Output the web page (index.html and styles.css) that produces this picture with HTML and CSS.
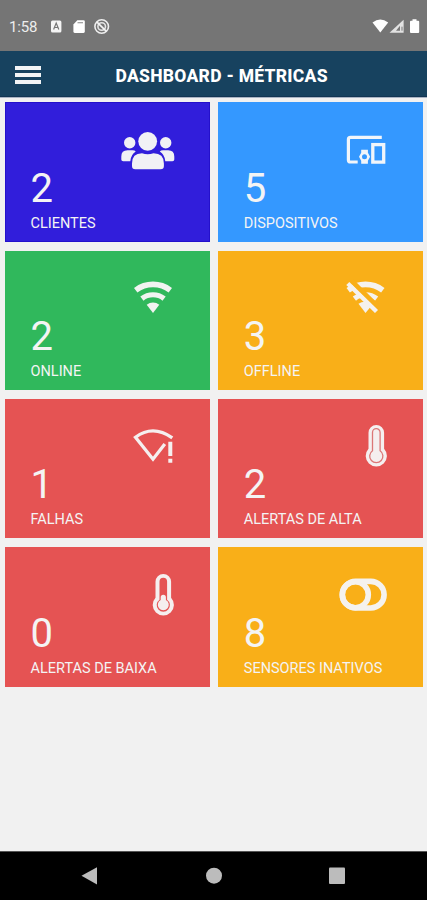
FILE: index.html
```html
<!DOCTYPE html>
<html lang="pt-BR">
<head>
<meta charset="utf-8">
<title>Dashboard - Métricas</title>
<link rel="stylesheet" href="styles.css">
</head>
<body>
<div class="status">
  <span class="clock">1:58</span>
  <svg class="status-left" width="62" height="18" viewBox="0 0 62 18">
    <rect x="1" y="2.500" width="10.400" height="12" rx="1.500" fill="#f4f4f4"/>
    <path d="M3.600 11.500 6.200 5.100 8.800 11.500M4.600 9.500h3.200" fill="none" stroke="#757575" stroke-width="1.200"/>
    <path d="M27.300 2.300h6.200q1.300 0 1.300 1.300v10q0 1.300-1.300 1.300h-8.800q-1.300 0-1.300-1.300V6.500z" fill="#fff"/>
    <path d="M27.500 4.700h5.500" stroke="#999" stroke-width="1.200"/>
    <circle cx="51.700" cy="8.500" r="6.800" fill="none" stroke="#eee" stroke-width="1.600"/>
    <circle cx="51.700" cy="8.500" r="3.800" fill="none" stroke="#e4e4e4" stroke-width="1.600"/>
    <path d="m47 4.100 9.400 9.200" stroke="#f4f4f4" stroke-width="1.700"/>
  </svg>
  <svg class="status-right" width="48" height="18" viewBox="0 0 48 18">
    <path d="M.500 4.500Q8.300-1.600 16.200 4.500L8.300 14.500Z" fill="#fff"/>
    <path d="M17.500 14.700 31.600 1.700V14.700Z" fill="#e2e2e2"/>
    <path d="m24 12.700 4-5v5z" fill="#777"/>
    <path d="M30 8.700v4" stroke="#777" stroke-width="1"/>
    <path d="M40.500 1.300h4v1.500h1.700q1 0 1 1v10.200q0 1-1 1h-7.200q-1 0-1-1V3.800q0-1 1-1h1.500z" fill="#fff"/>
  </svg>
</div>
<header class="bar">
  <div class="menu"><i></i><i></i><i></i></div>
  <h1 class="title">DASHBOARD - MÉTRICAS</h1>
</header>
<main class="grid">
  <section class="card blue">
    <svg class="icon" viewBox="0 0 60 52" fill="#f1f1f5">
      <circle cx="9.700" cy="21.700" r="5.700"/><circle cx="45.700" cy="21.700" r="5.700"/>
      <path d="M1.300 38.500V35.500Q1.300 29.300 7.500 29.300H12.500Q14.800 29.300 15.700 30.600Q11 33.500 10.300 40.300H3.200Q1.300 40.300 1.300 38.500Z"/>
      <path d="M54.300 38.500V35.500Q54.300 29.300 48.100 29.300H43Q40.700 29.300 39.800 30.600Q44.600 33.500 45.300 40.300H52.400Q54.300 40.300 54.300 38.500Z"/>
      <circle cx="27.700" cy="20.300" r="9.400"/>
      <path d="M12 45V42.500Q12 32.300 22 32.300Q27.700 34 33.500 32.300Q43.900 32.300 43.900 42.500V45Q43.900 48.300 40.600 48.300H15.300Q12 48.300 12 45Z"/>
    </svg>
    <strong class="value">2</strong><span class="label">CLIENTES</span>
  </section>
  <section class="card sky">
    <svg class="icon" viewBox="0 0 60 52" fill="none" stroke="#f1f5fa">
      <path d="M48.800 16.300H17.500Q15.400 16.300 15.400 18.400V38.900Q15.400 41 17.500 41H24.700" stroke-width="3.200"/>
      <rect x="39.800" y="23.600" width="10.900" height="17.500" stroke-width="3.300"/>
      <path d="M28.200 28.700h6.700v3l2.200 4-2.200 4v3h-6.700v-3l-2.200-4 2.200-4z" fill="#f1f5fa" stroke="none"/>
      <circle cx="31.500" cy="35.700" r="2.500" fill="#3498ff" stroke="none"/>
    </svg>
    <strong class="value">5</strong><span class="label">DISPOSITIVOS</span>
  </section>
  <section class="card green">
    <svg class="icon" viewBox="0 0 60 52" fill="none" stroke="#f1f3f1">
      <path d="M15.700 21.200A28.600 28.600 0 0 1 50.300 21.200" stroke-width="5.600"/>
      <path d="M21.900 29.600A18 18 0 0 1 44.100 29.600" stroke-width="5.200"/>
      <path d="M33 44 26.700 35.700A10.500 10.500 0 0 1 39.300 35.700Z" fill="#f1f3f1" stroke="none"/>
    </svg>
    <strong class="value">2</strong><span class="label">ONLINE</span>
  </section>
  <section class="card amber">
    <svg class="icon" viewBox="0 0 60 52" fill="none" stroke="#f5f2ee">
      <path d="M15.200 21.200A28.600 28.600 0 0 1 49.800 21.200" stroke-width="5.600"/>
      <path d="M21.400 29.600A18 18 0 0 1 43.600 29.600" stroke-width="5.200"/>
      <path d="M32.500 44 25.500 34.800A11 11 0 0 1 39.300 35.700Z" fill="#f5f2ee" stroke="none"/>
      <path d="M15 8.500 48 41.200" stroke="#f9af18" stroke-width="5"/>
      <path d="M14.800 14.500 43.500 42.500" stroke-width="4.400"/>
    </svg>
    <strong class="value">3</strong><span class="label">OFFLINE</span>
  </section>
  <section class="card red">
    <svg class="icon" viewBox="0 0 60 52" fill="none" stroke="#f5efef">
      <path d="M52.300 20.800Q33 7.200 15.500 20.200L33 42.200 44.800 27" stroke-width="3.300"/>
      <path d="M50.300 24.700V39M50.300 41.700v4" stroke-width="4"/>
    </svg>
    <strong class="value">1</strong><span class="label">FALHAS</span>
  </section>
  <section class="card red">
    <svg class="icon" viewBox="0 0 60 52">
      <path d="M35.500 15.800a7.800 7.800 0 0 1 15.600 0V31.800a10.600 10.600 0 1 1-15.600 0Z" fill="#f5efef"/>
      <path d="M39.500 15.500a3.800 3.800 0 0 1 7.600 0V33.700a6.600 6.600 0 1 1-7.600 0Z" fill="none" stroke="#dc7777" stroke-width="1.300"/>
    </svg>
    <strong class="value">2</strong><span class="label">ALERTAS DE ALTA</span>
  </section>
  <section class="card red">
    <svg class="icon" viewBox="0 0 60 52">
      <path d="M35.500 15.800a7.800 7.800 0 0 1 15.600 0V31.800a10.600 10.600 0 1 1-15.600 0Z" fill="#f5efef"/>
      <path d="M39.500 15.500a3.800 3.800 0 0 1 7.600 0V33.700a6.600 6.600 0 1 1-7.600 0Z" fill="#e55353"/>
      <path d="M40.700 31.300a2.600 2.600 0 0 1 5.200 0V34a5.500 5.500 0 1 1-5.200 0Z" fill="#f5efef"/>
    </svg>
    <strong class="value">0</strong><span class="label">ALERTAS DE BAIXA</span>
  </section>
  <section class="card amber">
    <svg class="icon" viewBox="0 0 60 52" fill="none" stroke="#f5f2ee" stroke-width="5.600">
      <rect x="9.300" y="15.400" width="41.800" height="26.600" rx="13.300"/>
      <circle cx="22.300" cy="28.700" r="13"/>
    </svg>
    <strong class="value">8</strong><span class="label">SENSORES INATIVOS</span>
  </section>
</main>
<nav class="nav">
  <svg width="427" height="48" viewBox="0 0 427 48" fill="#bcbcbc">
    <path d="M81.500 23.800 97 15.300V32.500Z"/>
    <circle cx="214" cy="23.700" r="8"/>
    <rect x="329" y="15.500" width="16" height="16.500" rx="1"/>
  </svg>
</nav>
</body>
</html>
```
FILE: styles.css
```css
* { box-sizing: border-box; }
body {
  margin: 0;
  width: 427px;
  height: 900px;
  display: flex;
  flex-direction: column;
  background: #f1f1f1;
  font-family: Roboto, "Liberation Sans", sans-serif;
  color: #f4f4f4;
  overflow: hidden;
}
svg { display: block; flex: none; }
.status {
  height: 51px;
  padding: 2px 7px 0 9px;
  display: flex;
  align-items: center;
  background: #757575;
}
.clock { width: 41px; font-size: 15px; letter-spacing: -0.2px; color: #ededed; }
.status-right { margin-left: auto; }
.bar {
  height: 47px;
  padding: 0 15px;
  display: flex;
  align-items: center;
  background: #17425f;
  border-bottom: 1px solid #a9b4c4;
  box-shadow: inset 0 -1px #123553;
}
.menu { width: 100.500px; display: flex; flex-direction: column; gap: 3px; padding-top: 1px; }
.menu i { width: 26px; height: 4px; background: #f2f4f6; }
.title { margin: 3px 0 0; font-size: 17.500px; font-weight: 800; letter-spacing: 0.270px; white-space: nowrap; color: #fff; }
.grid {
  flex: 1;
  padding: 4.400px 4px 0 5px;
  display: grid;
  grid-template-columns: 205px 205px;
  grid-auto-rows: 139.300px;
  align-content: start;
  gap: 9px 8.300px;
}
.card {
  display: flex;
  flex-direction: column;
  padding: 18.500px 0 0 25.500px;
}
.icon { width: 60px; height: 52px; margin-left: 89.500px; }
.value { font-size: 40px; font-weight: 400; line-height: 40px; margin-top: -4px; }
.label { font-size: 14.500px; line-height: 18px; margin-top: 6px; white-space: nowrap; }
.blue { background: #311edb; box-shadow: inset 0 0 0 1px #2410cc; }
.sky { background: #3498ff; }
.green { background: #30b85c; }
.amber { background: #f9af18; }
.red { background: #e55353; }
.nav { height: 49px; background: #000; border-top: 1px solid #555; }
```
